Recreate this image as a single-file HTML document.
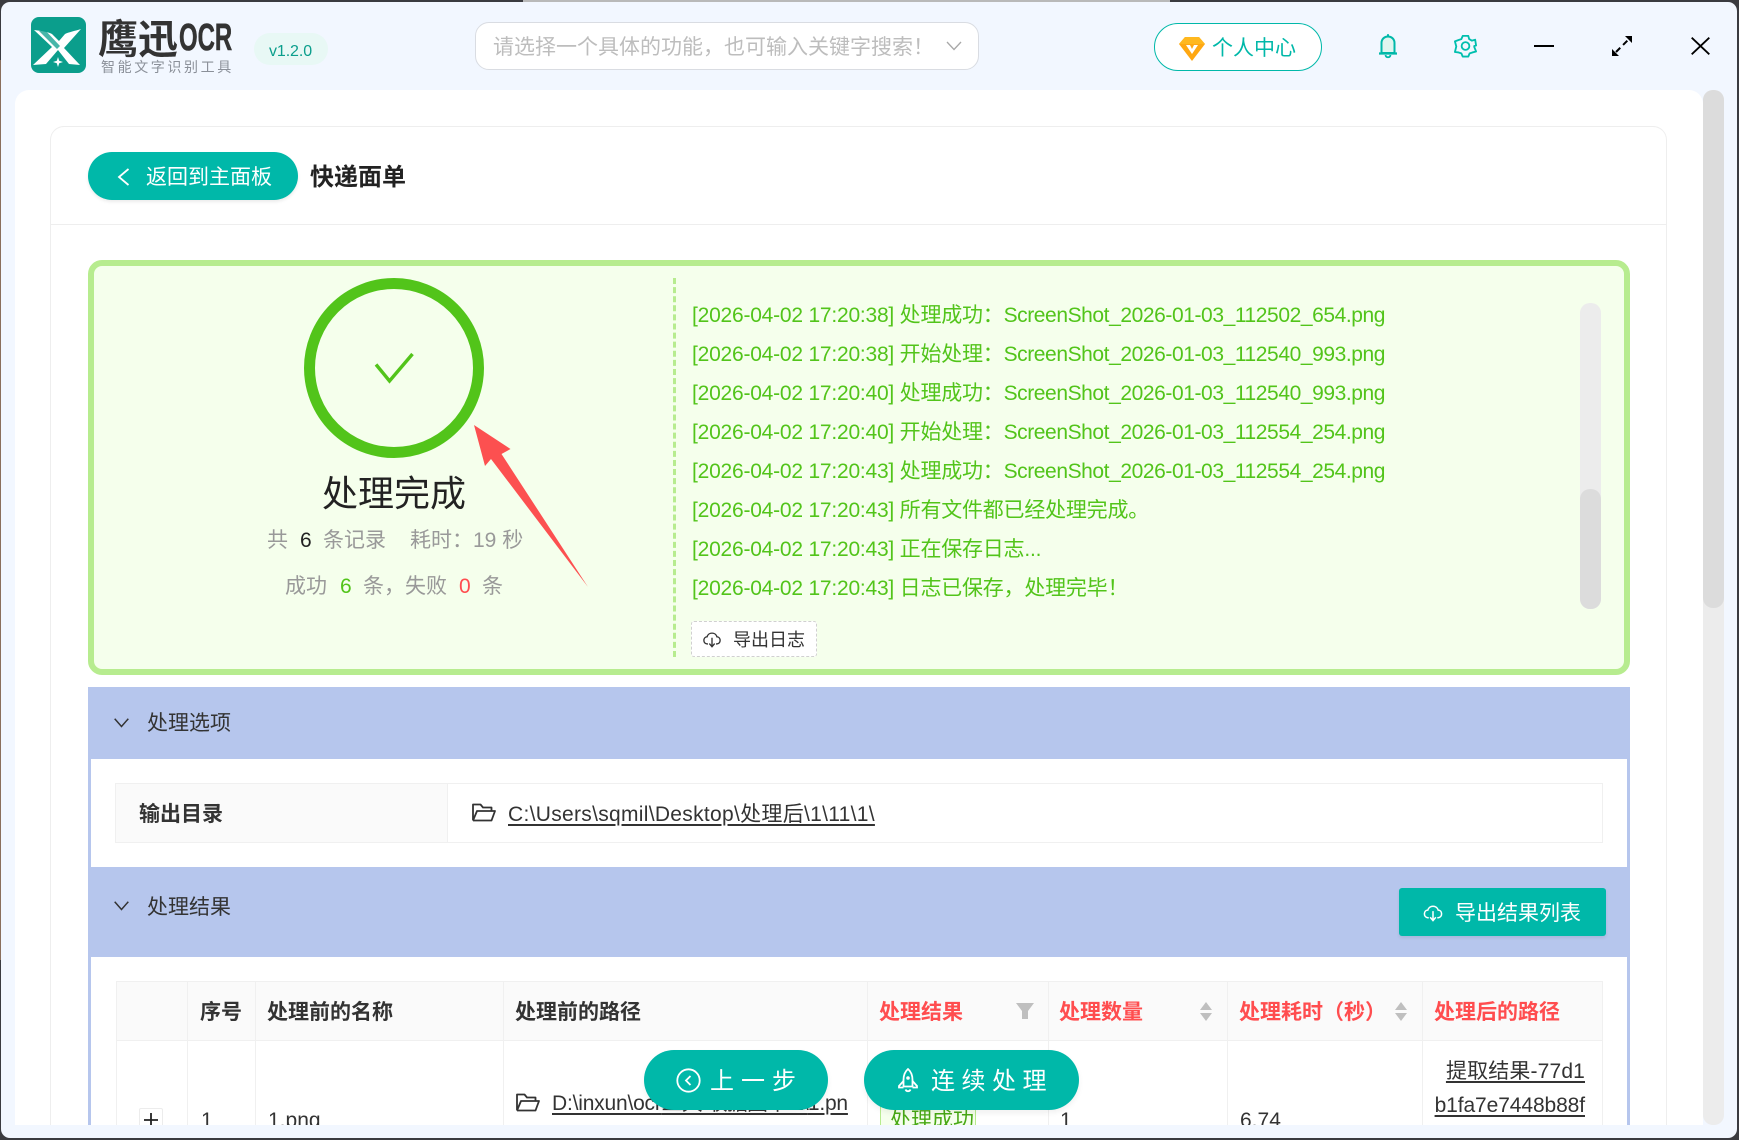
<!DOCTYPE html>
<html lang="zh-CN"><head><meta charset="utf-8"><title>鹰迅OCR</title>
<style>
html,body{margin:0;padding:0;width:1739px;height:1140px;overflow:hidden;background:#3a3b40}
*{box-sizing:border-box}
body{font-family:"Liberation Sans","Noto Sans CJK SC",sans-serif;position:relative}
.a{position:absolute}
.t{position:absolute;white-space:nowrap;height:30px;line-height:30px;font-size:21px;color:#333;margin-top:1px}
.m2{margin-top:2px}
.b{font-weight:700}
.r{color:#ff4d4f}
.g{color:#52c41a}
.log{left:692px;color:#52c41a;letter-spacing:-.22px}
.log span{letter-spacing:-.42px}
.u{text-decoration:underline;text-underline-offset:3px}
.cb{background:#f0f0f0}
svg{position:absolute;display:block;overflow:visible}
</style></head><body>
<div class="a" style="left:523px;top:0;width:647px;height:3px;background:#b9b9b9"></div>
<div class="a" style="left:0;top:60px;width:2px;height:900px;background:#8a6f5c"></div>
<div id="win" class="a" style="left:1px;top:2px;width:1736px;height:1136px;background:#f2f7ff;border-radius:9px;overflow:hidden"></div>

<!-- header -->
<svg style="left:31px;top:17px" width="55" height="56" viewBox="0 0 55 56">
<rect width="55" height="56" rx="8" fill="#0b9e8c"/>
<path d="M3 13 C11 14 17 15 21 17 L28 24 L34 17 C38 15 44 14 50 12 L33 31 L49 48 L38 47 L27 33 L15 47 L2 48 L21 30 Z" fill="#fff"/>
<path d="M14 13 L29 29 L26 32 L8 14 Z" fill="#0b9e8c" opacity=".75"/>
<path d="M27 40 L28.2 43.8 L32 45 L28.2 46.2 L27 50 L25.8 46.2 L22 45 L25.8 43.8 Z" fill="#fff"/>
</svg>
<div class="t b" style="left:98px;top:17px;height:40px;line-height:38px;font-size:40px;color:#333;font-family:'Noto Sans CJK SC',sans-serif;margin-top:0">鹰迅</div>
<div class="t b" style="left:179px;top:18px;height:40px;line-height:40px;font-size:38px;color:#333;transform:scaleX(.63);transform-origin:left center;margin-top:0;-webkit-text-stroke:.6px #333">OCR</div>
<div class="t" style="left:101px;top:52px;font-size:14px;height:28px;line-height:28px;letter-spacing:2.6px;color:#8b9099">智能文字识别工具</div>
<div class="a" style="left:254px;top:33px;width:74px;height:32px;border-radius:16px;background:#e8f8f5"></div>
<div class="t m2" style="left:269px;top:35px;font-size:16px;color:#0b9e8c;letter-spacing:-.1px">v1.2.0</div>

<div class="a" style="left:475px;top:22px;width:504px;height:48px;background:#fff;border:1px solid #d9dce2;border-radius:14px"></div>
<div class="t m2" style="left:493px;top:31px;font-size:21px;color:#bdbdbd">请选择一个具体的功能，也可输入关键字搜索！</div>
<svg style="left:946px;top:41px" width="16" height="10"><path d="M1 1 L8 8.5 L15 1" fill="none" stroke="#a8a8a8" stroke-width="1.3"/></svg>

<div class="a" style="left:1154px;top:23px;width:168px;height:48px;background:#fff;border:1px solid #00b8a9;border-radius:24px"></div>
<svg style="left:1179px;top:37px" width="26" height="24" viewBox="0 0 26 24">
<path d="M6 0 H20 L26 7 L13 24 L0 7 Z" fill="#ffa812"/><path d="M6 0 H20 L26 7 H0 Z" fill="#ffb81f"/>
<path d="M7 8 H11 L13 12 L15 8 H19 L13 17 Z" fill="#fff"/></svg>
<div class="t m2" style="left:1212px;top:32px;font-size:21px;color:#00b8a9">个人中心</div>

<svg style="left:1378px;top:33px" width="20" height="26" viewBox="0 0 20 26">
<path d="M3.5 20 V10 C3.5 6 6.5 3.5 10 3.5 C13.5 3.5 16.5 6 16.5 10 V20 Z" fill="#dff5ef" stroke="#00b8a9" stroke-width="2"/>
<path d="M1 20.5 H19" stroke="#00b8a9" stroke-width="2.2"/><path d="M10 1.2 V3.5" stroke="#00b8a9" stroke-width="2"/>
<path d="M7.5 22 C8 25 12 25 12.5 22" fill="none" stroke="#00b8a9" stroke-width="1.8"/></svg>
<svg style="left:1454px;top:34px" width="23" height="24" viewBox="0 0 25 26">
<path d="M9.5 2 H15.5 L16.5 5.5 L19.5 7.2 L23 6.2 L24 12.5 L22 13 V14 L24 19 L20 20 L17 21 L15.5 24.5 H9.5 L8 21 L5 20 L1 19.5 L2.5 13.5 L1 8 L5 6.5 L8 5.5 Z" fill="none" stroke="#00bfae" stroke-width="2" stroke-linejoin="round"/>
<circle cx="12.5" cy="13" r="4.2" fill="none" stroke="#00bfae" stroke-width="2"/></svg>
<div class="a" style="left:1534px;top:45px;width:20px;height:2px;background:#000"></div>
<svg style="left:1612px;top:36px" width="20" height="20" viewBox="0 0 20 20">
<path d="M4 16 L16 4" stroke="#000" stroke-width="2" stroke-dasharray="6 4"/><path d="M13 0 H20 V7 Z M0 13 V20 H7 Z" fill="#000"/></svg>
<svg style="left:1691px;top:37px" width="19" height="18"><path d="M.7 .7 L18.3 17.3 M18.3 .7 L.7 17.3" stroke="#000" stroke-width="1.8"/></svg>

<!-- content -->
<div id="content" class="a" style="left:15px;top:90px;width:1688px;height:1035px;background:#fff;border-radius:14px 14px 0 0;overflow:hidden">
<div style="position:absolute;left:-15px;top:-90px;width:1739px;height:1140px">

<div class="a" style="left:50px;top:126px;width:1617px;height:1014px;border:1px solid #eeeeee;border-radius:14px 14px 0 0"></div>
<div class="a" style="left:51px;top:224px;width:1615px;height:1px;background:#eeeeee"></div>

<div class="a" style="left:88px;top:152px;width:210px;height:48px;background:#00b8a9;border-radius:24px;box-shadow:0 2px 3px rgba(0,0,0,.08)"></div>
<svg style="left:117px;top:168px" width="13" height="18"><path d="M11.5 1 L2 9 L11.5 17" fill="none" stroke="#fff" stroke-width="1.8"/></svg>
<div class="t" style="left:146px;top:162px;color:#fff">返回到主面板</div>
<div class="t b" style="left:310px;top:162px;font-size:24px;color:#222">快递面单</div>

<!-- green -->
<div class="a" style="left:88px;top:260px;width:1542px;height:415px;background:#f5ffec;border:6px solid #b7ec8f;border-radius:14px"></div>
<svg style="left:304px;top:278px" width="180" height="180"><circle cx="90" cy="90" r="84.5" fill="none" stroke="#52c41a" stroke-width="11"/>
<path d="M72 86.5 L85.5 103 L108.5 76" fill="none" stroke="#52c41a" stroke-width="3.4"/></svg>
<div class="t m2" style="left:322px;top:472px;height:40px;line-height:40px;font-size:36px;color:#222">处理完成</div>
<div class="t m2" style="left:267px;top:524px;color:#999">共</div>
<div class="t m2" style="left:300px;top:524px;color:#222">6</div>
<div class="t m2" style="left:323px;top:524px;color:#999">条记录</div>
<div class="t m2" style="left:410px;top:524px;color:#999">耗时：19 秒</div>
<div class="t m2" style="left:285px;top:570px;color:#999">成功</div>
<div class="t g m2" style="left:340px;top:570px">6</div>
<div class="t m2" style="left:363px;top:570px;color:#999">条，失败</div>
<div class="t r m2" style="left:459px;top:570px">0</div>
<div class="t m2" style="left:482px;top:570px;color:#999">条</div>

<div class="a" style="left:673px;top:278px;width:0;height:379px;border-left:3px dashed #b7ec8f"></div>
<div class="t log" style="top:300px">[2026-04-02 17:20:38] 处理成功：<span>ScreenShot_2026-01-03_112502_654.png</span></div>
<div class="t log" style="top:339px">[2026-04-02 17:20:38] 开始处理：<span>ScreenShot_2026-01-03_112540_993.png</span></div>
<div class="t log" style="top:378px">[2026-04-02 17:20:40] 处理成功：<span>ScreenShot_2026-01-03_112540_993.png</span></div>
<div class="t log" style="top:417px">[2026-04-02 17:20:40] 开始处理：<span>ScreenShot_2026-01-03_112554_254.png</span></div>
<div class="t log" style="top:456px">[2026-04-02 17:20:43] 处理成功：<span>ScreenShot_2026-01-03_112554_254.png</span></div>
<div class="t log" style="top:495px">[2026-04-02 17:20:43] 所有文件都已经处理完成。</div>
<div class="t log" style="top:534px">[2026-04-02 17:20:43] 正在保存日志...</div>
<div class="t log" style="top:573px">[2026-04-02 17:20:43] 日志已保存，处理完毕！</div>
<div class="a" style="left:691px;top:621px;width:126px;height:36px;background:#fff;border:1px dashed #d0d0d0;border-radius:3px"></div>
<svg style="left:703px;top:631px" width="18" height="17" viewBox="0 0 20 19"><path d="M5.5 14.5 H4.5 C-.5 14 0 6.5 4.5 6.5 C6 1 14 1 15.5 6.5 C20 6.5 20.5 14 15.5 14.5 H14.5" fill="none" stroke="#333" stroke-width="1.5"/><path d="M10 7.5 V17 M7 14 L10 17.5 L13 14" fill="none" stroke="#333" stroke-width="1.5"/></svg>
<div class="t" style="left:733px;top:624px;font-size:18px">导出日志</div>
<div class="a" style="left:1580px;top:303px;width:21px;height:306px;background:#ececec;border-radius:10px"></div>
<div class="a" style="left:1580px;top:489px;width:21px;height:120px;background:#dcdcdc;border-radius:10px"></div>

<!-- sections -->
<div class="a" style="left:88px;top:759px;width:3px;height:381px;background:#b6c6ed"></div>
<div class="a" style="left:1627px;top:759px;width:3px;height:381px;background:#b6c6ed"></div>
<div class="a" style="left:88px;top:687px;width:1542px;height:72px;background:#b6c6ed"></div>
<svg style="left:114px;top:718px" width="15" height="10"><path d="M.7 .7 L7.5 8.5 L14.3 .7" fill="none" stroke="#333" stroke-width="1.5"/></svg>
<div class="t m2" style="left:147px;top:707px">处理选项</div>

<div class="a" style="left:115px;top:783px;width:1488px;height:60px;border:1px solid #f0f0f0"></div>
<div class="a" style="left:116px;top:784px;width:332px;height:58px;background:#fafafa;border-right:1px solid #f0f0f0"></div>
<div class="t b" style="left:139px;top:799px">输出目录</div>
<svg style="left:472px;top:803px" width="24" height="19" viewBox="0 0 24 19"><path d="M1 17.5 V1.5 H8.5 L11 4.5 H19.5 V8 M1 17.5 H19.5 L23 8 H5 L1 17.5" fill="none" stroke="#333" stroke-width="1.8" stroke-linejoin="round"/></svg>
<div class="t u" style="left:508px;top:799px;letter-spacing:.3px">C:\Users\sqmil\Desktop\处理后\1\11\1\</div>

<div class="a" style="left:88px;top:867px;width:1542px;height:90px;background:#b6c6ed"></div>
<svg style="left:114px;top:901px" width="15" height="10"><path d="M.7 .7 L7.5 8.5 L14.3 .7" fill="none" stroke="#333" stroke-width="1.5"/></svg>
<div class="t m2" style="left:147px;top:891px">处理结果</div>
<div class="a" style="left:1399px;top:888px;width:207px;height:48px;background:#00b8a9;border-radius:3px;box-shadow:0 2px 3px rgba(0,0,0,.08)"></div>
<svg style="left:1423px;top:904px" width="20" height="18" viewBox="0 0 20 19"><path d="M5.5 14.5 H4.5 C-.5 14 0 6.5 4.5 6.5 C6 1 14 1 15.500 6.5 C20 6.5 20.5 14 15.5 14.5 H14.5" fill="none" stroke="#fff" stroke-width="1.6"/><path d="M10 7.5 V17 M7 14 L10 17.5 L13 14" fill="none" stroke="#fff" stroke-width="1.6"/></svg>
<div class="t" style="left:1455px;top:898px;color:#fff">导出结果列表</div>

<!-- table -->
<div class="a" style="left:116px;top:982px;width:1487px;height:58px;background:#fafafa"></div>
<div class="a cb" style="left:116px;top:981px;width:1487px;height:1px"></div>
<div class="a cb" style="left:116px;top:1040px;width:1487px;height:1px"></div>
<div class="a cb" style="left:116px;top:981px;width:1px;height:150px"></div>
<div class="a cb" style="left:187px;top:981px;width:1px;height:150px"></div>
<div class="a cb" style="left:255px;top:981px;width:1px;height:150px"></div>
<div class="a cb" style="left:503px;top:981px;width:1px;height:150px"></div>
<div class="a cb" style="left:867px;top:981px;width:1px;height:150px"></div>
<div class="a cb" style="left:1048px;top:981px;width:1px;height:150px"></div>
<div class="a cb" style="left:1227px;top:981px;width:1px;height:150px"></div>
<div class="a cb" style="left:1422px;top:981px;width:1px;height:150px"></div>
<div class="a cb" style="left:1602px;top:981px;width:1px;height:150px"></div>
<div class="t b" style="left:200px;top:997px">序号</div>
<div class="t b" style="left:267px;top:997px">处理前的名称</div>
<div class="t b" style="left:515px;top:997px">处理前的路径</div>
<div class="t b r" style="left:879px;top:997px">处理结果</div>
<div class="t b r" style="left:1059px;top:997px">处理数量</div>
<div class="t b r" style="left:1239px;top:997px">处理耗时（秒）</div>
<div class="t b r" style="left:1434px;top:997px">处理后的路径</div>
<svg style="left:1016px;top:1003px" width="18" height="16"><path d="M0 0 H18 L12 8 V16 H6 V8 Z" fill="#bfbfbf"/></svg>
<svg style="left:1200px;top:1002px" width="12" height="19"><path d="M6 0 L12 8 H0 Z M6 19 L12 11 H0 Z" fill="#bfbfbf"/></svg>
<svg style="left:1395px;top:1002px" width="12" height="19"><path d="M6 0 L12 8 H0 Z M6 19 L12 11 H0 Z" fill="#bfbfbf"/></svg>

<div class="a" style="left:139px;top:1108px;width:24px;height:24px;background:#fff;border:1px solid #ececec;border-radius:2px"></div>
<svg style="left:144px;top:1113px" width="14" height="14"><path d="M7 0 V14 M0 7 H14" stroke="#222" stroke-width="1.8"/></svg>
<div class="t" style="left:201px;top:1105px">1</div>
<div class="t" style="left:268px;top:1105px">1.png</div>
<svg style="left:516px;top:1093px" width="24" height="19" viewBox="0 0 24 19"><path d="M1 17.5 V1.5 H8.500 L11 4.5 H19.5 V8 M1 17.5 H19.5 L23 8 H5 L1 17.5" fill="none" stroke="#333" stroke-width="1.8" stroke-linejoin="round"/></svg>
<div class="t u" style="left:552px;top:1088px;letter-spacing:-.2px">D:\inxun\ocr<span style="letter-spacing:-.9px">工具\收据图中\1\</span>1.pn</div>
<div class="a" style="left:880px;top:1095px;width:96px;height:45px;background:#f6ffed;border:1px solid #b7eb8f"></div>
<div class="t" style="left:890px;top:1105px;color:#48a815">处理成功</div>
<div class="t" style="left:1060px;top:1105px">1</div>
<div class="t" style="left:1240px;top:1105px">6.74</div>
<div class="t u" style="right:154px;top:1056px;letter-spacing:.15px">提取结果-77d1</div>
<div class="t u" style="right:154px;top:1090px;letter-spacing:-.1px">b1fa7e7448b88f</div>

<!-- floating buttons -->
<div class="a" style="left:644px;top:1050px;width:184px;height:60px;background:#00b8a9;border-radius:30px;box-shadow:0 3px 6px rgba(0,0,0,.06)"></div>
<svg style="left:676px;top:1068px" width="25" height="25"><circle cx="12.5" cy="12.5" r="11.2" fill="none" stroke="#fff" stroke-width="1.8"/><path d="M14.5 8 L10 12.5 L14.5 17" fill="none" stroke="#fff" stroke-width="1.8"/></svg>
<div class="t m2" style="left:710px;top:1065px;font-size:24px;color:#fff;letter-spacing:7px">上一步</div>
<div class="a" style="left:864px;top:1050px;width:215px;height:60px;background:#00b8a9;border-radius:30px;box-shadow:0 3px 6px rgba(0,0,0,.06)"></div>
<svg style="left:898px;top:1068px" width="20" height="25" viewBox="0 0 20 25"><path d="M10 1 C13.5 4 14.5 8 14.5 12 V18.5 H5.5 V12 C5.5 8 6.5 4 10 1 Z" fill="none" stroke="#fff" stroke-width="1.8"/><path d="M5.5 13 L1 18 V19.5 H5.5 M14.5 13 L19 18 V19.5 H14.5 M7.5 21.5 C8.5 23.8 11.5 23.8 12.5 21.5" fill="none" stroke="#fff" stroke-width="1.8"/><circle cx="10" cy="10" r="1.8" fill="#fff"/></svg>
<div class="t m2" style="left:931px;top:1065px;font-size:24px;color:#fff;letter-spacing:6.5px">连续处理</div>

<!-- arrow -->
<svg style="left:0;top:0" width="700" height="700"><path d="M474 425 L510.5 449 L501.5 454 L588 587 L491 459 L485 466 Z" fill="#fc5050"/></svg>
</div></div>

<!-- page scrollbar -->
<div class="a" style="left:1703px;top:90px;width:21px;height:1035px;background:#ececec;border-radius:10px"></div>
<div class="a" style="left:1703px;top:90px;width:21px;height:518px;background:#dcdcdc;border-radius:10px"></div>
</body></html>
